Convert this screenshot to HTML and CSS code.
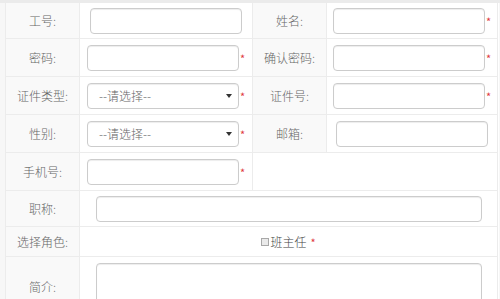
FILE: index.html
```html
<!DOCTYPE html>
<html lang="zh">
<head>
    <meta charset="UTF-8">
    <title>用户信息</title>
    <link rel="stylesheet" href="styles.css">
</head>
<body>
    <div class="topbar"></div>
    <div class="page">
        <form class="info-grid">
            <div class="lbl">工号:</div>
            <div class="field"><input type="text" class="ctl"></div>
            <div class="lbl">姓名:</div>
            <div class="field"><input type="text" class="ctl"><span class="req">*</span></div>

            <div class="lbl">密码:</div>
            <div class="field"><input type="password" class="ctl"><span class="req">*</span></div>
            <div class="lbl">确认密码:</div>
            <div class="field"><input type="password" class="ctl"><span class="req">*</span></div>

            <div class="lbl">证件类型:</div>
            <div class="field"><div class="ctl sel"><span>--请选择--</span><i class="arrow"></i></div><span class="req">*</span></div>
            <div class="lbl">证件号:</div>
            <div class="field"><input type="text" class="ctl"><span class="req">*</span></div>

            <div class="lbl">性别:</div>
            <div class="field"><div class="ctl sel"><span>--请选择--</span><i class="arrow"></i></div><span class="req">*</span></div>
            <div class="lbl">邮箱:</div>
            <div class="field"><input type="text" class="ctl"></div>

            <div class="lbl">手机号:</div>
            <div class="field"><input type="text" class="ctl"><span class="req">*</span></div>
            <div class="field span2"></div>

            <div class="lbl">职称:</div>
            <div class="field span3"><input type="text" class="ctl wide"></div>

            <div class="lbl">选择角色:</div>
            <div class="field span3"><span class="check"></span><span class="role">班主任</span><span class="req role-req">*</span></div>

            <div class="lbl">简介:</div>
            <div class="field span3"><textarea class="ctl wide area"></textarea></div>
        </form>
    </div>
</body>
</html>
```

FILE: styles.css
```css
html, body {
    margin: 0;
    padding: 0;
    height: 299px;
    overflow: hidden;
    background-color: #f7f7f7;
    font-family: "Noto Sans CJK SC", "Noto Sans", sans-serif;
    font-size: 12px;
    font-weight: 300;
    color: #666;
}
.topbar {
    height: 3px;
    background-color: #ebebeb;
}
.page {
    padding-left: 5px;
}
.info-grid {
    display: grid;
    grid-template-columns: 74px 173px 74px 171px;
    grid-template-rows: 36px 38px 38px 38px 38px 36px 30px 60px;
    width: 493px;
    border-left: 1px solid #ececec;
    background-color: #fff;
    margin: 0;
}
.lbl,
.field {
    box-sizing: border-box;
    border-right: 1px solid #ececec;
    border-bottom: 1px solid #ececec;
    display: flex;
    align-items: center;
    justify-content: center;
}
.lbl {
    background-color: #f9f9f9;
    color: #666;
}
.field {
    background-color: #fff;
}
.span2 {
    grid-column: span 2;
}
.span3 {
    grid-column: span 3;
}
.ctl {
    box-sizing: border-box;
    width: 152px;
    height: 26px;
    margin: 0;
    padding: 0 10px;
    border: 1px solid #ccc;
    border-radius: 4px;
    background-color: #fff;
    box-shadow: inset 0 1px 1px rgba(0, 0, 0, 0.075);
    font-family: inherit;
    font-size: 12px;
    font-weight: 300;
    color: #666;
}
.ctl.wide {
    width: 386px;
}
.area {
    height: 42px;
    align-self: flex-start;
    margin-top: 6px;
    resize: none;
}
.sel {
    display: flex;
    align-items: center;
    justify-content: space-between;
    padding: 0 6px 0 11px;
}
.arrow {
    width: 0;
    height: 0;
    border-left: 3px solid transparent;
    border-right: 3px solid transparent;
    border-top: 4px solid #333;
}
.req {
    color: #e0393e;
    font-size: 11px;
    font-weight: 400;
    margin-left: 1px;
    line-height: 1;
    position: relative;
    top: 1px;
}
.role-req {
    margin-left: 4px;
}
.check {
    box-sizing: border-box;
    width: 8px;
    height: 8px;
    border: 1px solid #a8a8a8;
    background-color: #eaeaea;
    margin-right: 1px;
}
.role {
    color: #444;
}
```
